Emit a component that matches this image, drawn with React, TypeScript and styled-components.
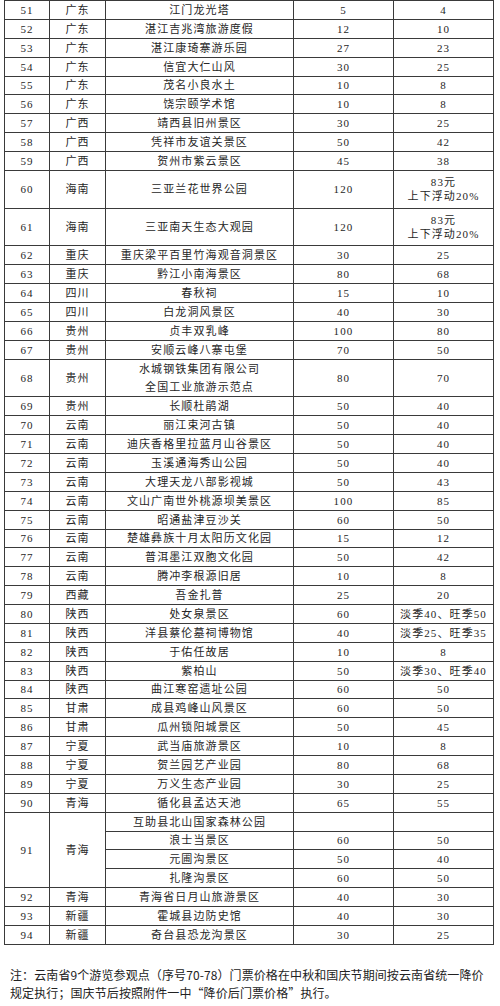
import React from 'react'
import styled, { createGlobalStyle } from 'styled-components'

const GlobalStyle = createGlobalStyle`
  html, body {
    margin: 0;
    padding: 0;
    background: #fff;
  }
  body {
    font-family: "Liberation Serif", "Noto Sans CJK SC", serif;
    color: #262626;
  }
`

const UNIT = 18.88

const Page = styled.div`
  width: 500px;
  height: 1006px;
  padding-left: 4px;
  box-sizing: border-box;
  overflow: hidden;
`

const Grid = styled.div`
  display: grid;
  grid-template-columns: 45px 56px 188px 100px 100px;
  grid-auto-rows: ${UNIT}px;
  width: max-content;
  border-top: 1px solid #3a3a3a;
  border-left: 1px solid #3a3a3a;
`

const Cell = styled.div<{ $span?: number; $lh?: number }>`
  grid-row: span ${(p) => p.$span || 1};
  display: flex;
  flex-direction: column;
  align-items: center;
  justify-content: center;
  text-align: center;
  border-right: 1px solid #3a3a3a;
  border-bottom: 1px solid #3a3a3a;
  font-size: 11px;
  letter-spacing: 1.1px;
  line-height: ${(p) => p.$lh || 14}px;
  white-space: nowrap;
  overflow: hidden;
`

const Note = styled.p`
  margin: 21px 0 0 6px;
  font-family: "Noto Sans CJK SC", sans-serif;
  font-size: 12px;
  letter-spacing: 0.1px;
  line-height: 18px;
  white-space: nowrap;
  color: #222;
`

type Row = {
  no: number
  prov: string
  name: string | string[]
  std: string
  now: string | string[]
  span?: number
}

const floatPrice = ['83元', '上下浮动20%']

const rows: Row[] = [
  { no: 51, prov: '广东', name: '江门龙光塔', std: '5', now: '4' },
  { no: 52, prov: '广东', name: '湛江吉兆湾旅游度假', std: '12', now: '10' },
  { no: 53, prov: '广东', name: '湛江康琦寨游乐园', std: '27', now: '23' },
  { no: 54, prov: '广东', name: '信宜大仁山风', std: '30', now: '25' },
  { no: 55, prov: '广东', name: '茂名小良水土', std: '10', now: '8' },
  { no: 56, prov: '广东', name: '饶宗颐学术馆', std: '10', now: '8' },
  { no: 57, prov: '广西', name: '靖西县旧州景区', std: '30', now: '25' },
  { no: 58, prov: '广西', name: '凭祥市友谊关景区', std: '50', now: '42' },
  { no: 59, prov: '广西', name: '贺州市紫云景区', std: '45', now: '38' },
  { no: 60, prov: '海南', name: '三亚兰花世界公园', std: '120', now: floatPrice, span: 2 },
  { no: 61, prov: '海南', name: '三亚南天生态大观园', std: '120', now: floatPrice, span: 2 },
  { no: 62, prov: '重庆', name: '重庆梁平百里竹海观音洞景区', std: '30', now: '25' },
  { no: 63, prov: '重庆', name: '黔江小南海景区', std: '80', now: '68' },
  { no: 64, prov: '四川', name: '春秋祠', std: '15', now: '10' },
  { no: 65, prov: '四川', name: '白龙洞风景区', std: '40', now: '30' },
  { no: 66, prov: '贵州', name: '贞丰双乳峰', std: '100', now: '80' },
  { no: 67, prov: '贵州', name: '安顺云峰八寨屯堡', std: '70', now: '50' },
  { no: 68, prov: '贵州', name: ['水城钢铁集团有限公司', '全国工业旅游示范点'], std: '80', now: '70', span: 2 },
  { no: 69, prov: '贵州', name: '长顺杜鹃湖', std: '50', now: '40' },
  { no: 70, prov: '云南', name: '丽江束河古镇', std: '50', now: '40' },
  { no: 71, prov: '云南', name: '迪庆香格里拉蓝月山谷景区', std: '50', now: '40' },
  { no: 72, prov: '云南', name: '玉溪通海秀山公园', std: '50', now: '40' },
  { no: 73, prov: '云南', name: '大理天龙八部影视城', std: '50', now: '43' },
  { no: 74, prov: '云南', name: '文山广南世外桃源坝美景区', std: '100', now: '85' },
  { no: 75, prov: '云南', name: '昭通盐津豆沙关', std: '60', now: '50' },
  { no: 76, prov: '云南', name: '楚雄彝族十月太阳历文化园', std: '15', now: '12' },
  { no: 77, prov: '云南', name: '普洱墨江双胞文化园', std: '50', now: '42' },
  { no: 78, prov: '云南', name: '腾冲李根源旧居', std: '10', now: '8' },
  { no: 79, prov: '西藏', name: '吾金扎普', std: '25', now: '20' },
  { no: 80, prov: '陕西', name: '处女泉景区', std: '60', now: '淡季40、旺季50' },
  { no: 81, prov: '陕西', name: '洋县蔡伦墓祠博物馆', std: '40', now: '淡季25、旺季35' },
  { no: 82, prov: '陕西', name: '于佑任故居', std: '10', now: '8' },
  { no: 83, prov: '陕西', name: '紫柏山', std: '50', now: '淡季30、旺季40' },
  { no: 84, prov: '陕西', name: '曲江寒窑遗址公园', std: '60', now: '50' },
  { no: 85, prov: '甘肃', name: '成县鸡峰山风景区', std: '60', now: '50' },
  { no: 86, prov: '甘肃', name: '瓜州锁阳城景区', std: '50', now: '45' },
  { no: 87, prov: '宁夏', name: '武当庙旅游景区', std: '10', now: '8' },
  { no: 88, prov: '宁夏', name: '贺兰园艺产业园', std: '80', now: '68' },
  { no: 89, prov: '宁夏', name: '万义生态产业园', std: '30', now: '25' },
  { no: 90, prov: '青海', name: '循化县孟达天池', std: '65', now: '55' },
]

// row 91 groups several sites under one number
const group91 = [
  { name: '互助县北山国家森林公园', std: '', now: '' },
  { name: '浪士当景区', std: '60', now: '50' },
  { name: '元圃沟景区', std: '50', now: '40' },
  { name: '扎隆沟景区', std: '60', now: '50' },
]

const tail: Row[] = [
  { no: 92, prov: '青海', name: '青海省日月山旅游景区', std: '40', now: '30' },
  { no: 93, prov: '新疆', name: '霍城县边防史馆', std: '40', now: '30' },
  { no: 94, prov: '新疆', name: '奇台县恐龙沟景区', std: '30', now: '25' },
]

const lines = (v: string | string[]) =>
  Array.isArray(v) ? v.map((t) => <span key={t}>{t}</span>) : v

const renderRow = (r: Row) => (
  <React.Fragment key={r.no}>
    <Cell $span={r.span}>{r.no}</Cell>
    <Cell $span={r.span}>{r.prov}</Cell>
    <Cell $span={r.span} $lh={18}>{lines(r.name)}</Cell>
    <Cell $span={r.span}>{r.std}</Cell>
    <Cell $span={r.span}>{lines(r.now)}</Cell>
  </React.Fragment>
)

const App: React.FC = () => {
  return (
    <Page>
      <GlobalStyle />
      <Grid>
        {rows.map(renderRow)}
        <Cell $span={4}>91</Cell>
        <Cell $span={4}>青海</Cell>
        {group91.map((g) => (
          <React.Fragment key={g.name}>
            <Cell>{g.name}</Cell>
            <Cell>{g.std}</Cell>
            <Cell>{g.now}</Cell>
          </React.Fragment>
        ))}
        {tail.map(renderRow)}
      </Grid>
      <Note>
        注：云南省9个游览参观点（序号70-78）门票价格在中秋和国庆节期间按云南省统一降价
        <br />
        规定执行；国庆节后按照附件一中“降价后门票价格”执行。
      </Note>
    </Page>
  )
}

export default App
